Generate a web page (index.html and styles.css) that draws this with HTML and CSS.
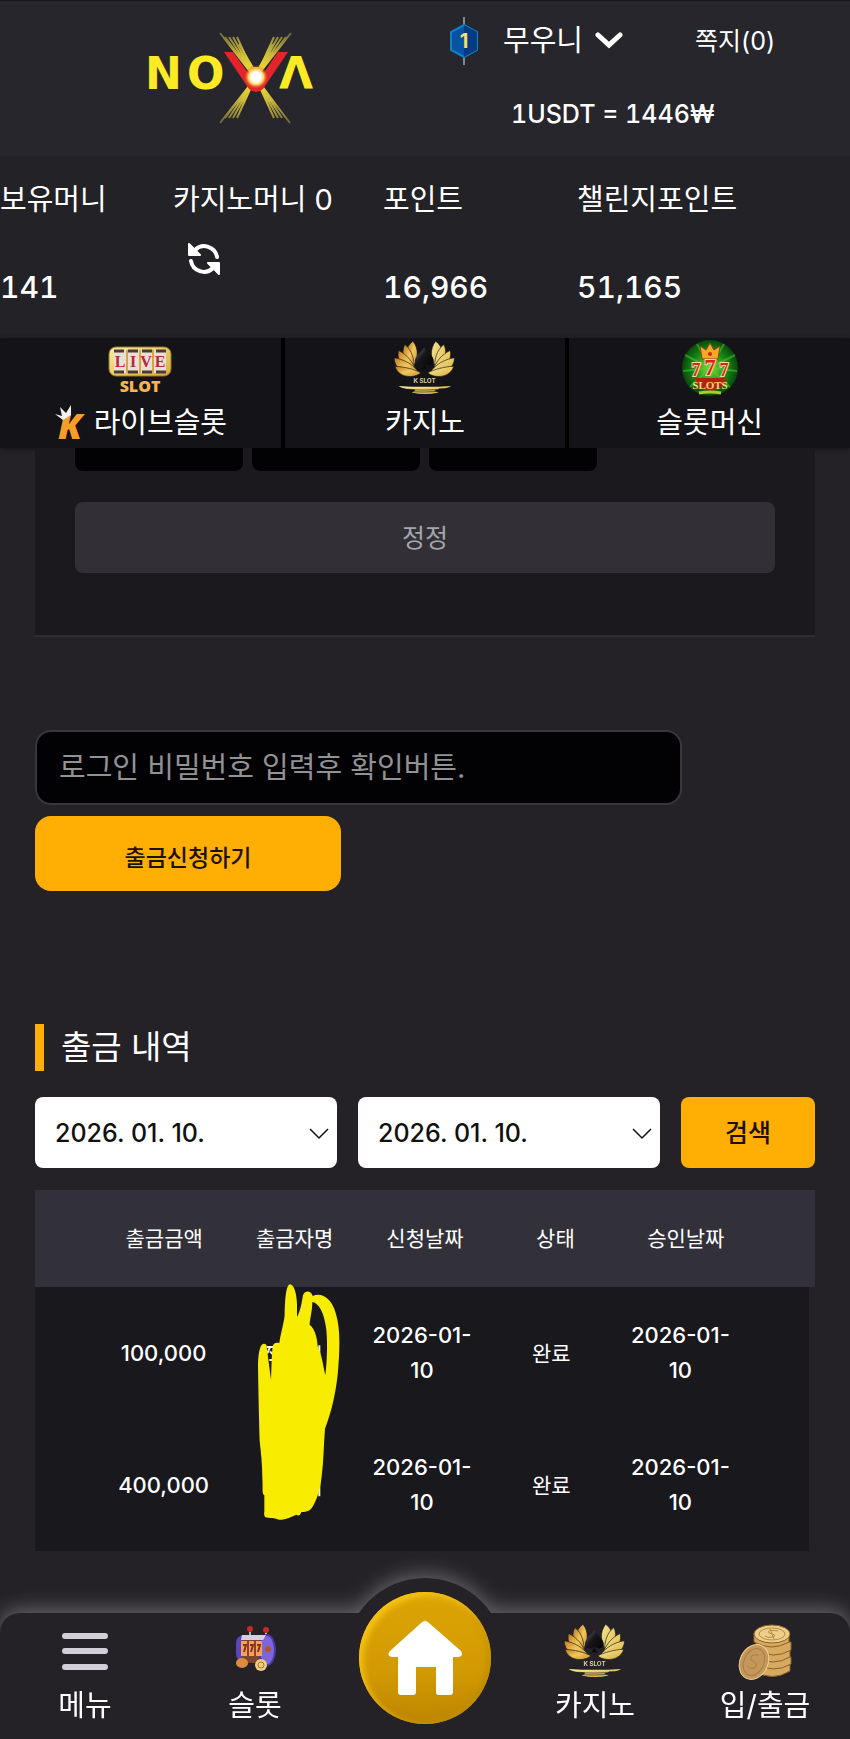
FILE: index.html
```html
<!DOCTYPE html>
<html lang="ko">
<head>
    <meta charset="UTF-8">
    <meta name="viewport" content="width=device-width, initial-scale=1.0">
    <title>NOVA</title>
    <link rel="stylesheet" href="styles.css">
</head>
<body>
    <!-- Shared gradients and icons -->
    <svg class="defs" width="0" height="0" aria-hidden="true">
        <defs>
            <linearGradient id="gold" x1="0" y1="0" x2="1" y2="1">
                <stop offset="0" stop-color="#b9781f"/>
                <stop offset="0.5" stop-color="#f2c75c"/>
                <stop offset="1" stop-color="#c98d2c"/>
            </linearGradient>
            <linearGradient id="gold-light" x1="0" y1="0" x2="1" y2="1">
                <stop offset="0" stop-color="#f7f0a0"/>
                <stop offset="1" stop-color="#dba936"/>
            </linearGradient>
            <linearGradient id="spade" x1="0" y1="0" x2="1" y2="1">
                <stop offset="0" stop-color="#77757e"/>
                <stop offset="0.4" stop-color="#17161a"/>
                <stop offset="1" stop-color="#000"/>
            </linearGradient>
            <symbol id="lotus" viewBox="25 10 195 175">
                <g fill="url(#gold)" stroke="#1c1a16" stroke-width="2">
                    <path d="M86 16C60 34 60 66 86 96C102 66 104 40 86 16Z"/>
                    <path d="M61 26C48 52 58 86 90 104C90 72 84 44 61 26Z"/>
                    <path d="M42 44C34 74 56 98 96 108C86 80 70 58 42 44Z"/>
                    <path d="M29 66C28 98 58 114 104 112C86 86 60 72 29 66Z"/>
                    <path d="M31 92C40 126 88 132 110 112C90 102 62 94 31 92Z"/>
                </g>
                <g fill="url(#gold-light)" stroke="#1c1a16" stroke-width="2">
                    <path d="M155 16C181 34 181 66 155 96C139 66 137 40 155 16Z"/>
                    <path d="M180 26C193 52 183 86 151 104C151 72 157 44 180 26Z"/>
                    <path d="M199 44C207 74 185 98 145 108C155 80 171 58 199 44Z"/>
                    <path d="M212 66C213 98 183 114 137 112C155 86 181 72 212 66Z"/>
                    <path d="M210 92C201 126 153 132 131 112C151 102 179 94 210 92Z"/>
                </g>
                <path d="M120 34C112 50 90 60 92 78C94 92 110 94 118 84C118 94 114 98 110 102H131C126 98 123 94 123 84C132 94 148 90 149 77C150 60 128 50 120 34Z" fill="url(#spade)"/>
                <text x="121" y="143" class="lotus-text">K SLOT</text>
                <path d="M42 152Q122 158 202 152Q190 160 166 160Q164 164 150 166Q158 170 164 172Q122 182 82 172Q96 168 90 163Q56 162 42 152Z" fill="url(#gold-light)"/>
                <path d="M70 162Q120 168 180 161M88 170Q120 172 158 169" stroke="#1c1a16" stroke-width="2" fill="none"/>
            </symbol>
        </defs>
    </svg>

    <header>
        <div class="header-content">
            <a href="#" class="logo" aria-label="NOVA">
                <svg width="172" height="94" viewBox="0 0 172 94">
                    <defs>
                        <radialGradient id="rays" gradientUnits="userSpaceOnUse" cx="107" cy="45" r="56">
                            <stop offset="0" stop-color="#ffe92e"/>
                            <stop offset="0.5" stop-color="#c9b83c"/>
                            <stop offset="1" stop-color="#6f6a38"/>
                        </radialGradient>
                        <radialGradient id="glow">
                            <stop offset="0" stop-color="#fff"/>
                            <stop offset="0.4" stop-color="#fff"/>
                            <stop offset="0.65" stop-color="#fbd35a"/>
                            <stop offset="1" stop-color="#f03a1c" stop-opacity="0"/>
                        </radialGradient>
                    </defs>
                    <text x="-4" y="57" class="logo-text">N</text>
                    <text x="38" y="57" class="logo-text">O</text>
                    <text x="130" y="57" class="logo-text">Λ</text>
                    <g stroke="url(#rays)" stroke-width="2">
                        <path d="M71 1L141 91M76 5L137 86M80 5L133 86M84 5L129 86M88 5L125 86"/>
                        <path d="M142 1L71 91M137 5L76 86M133 5L80 86M129 5L84 86M125 5L88 86"/>
                    </g>
                    <path d="M75 20H84L102 45Q107 51 112 45L129 20H139L114 57Q107 63 100 57Z" fill="#e3242b"/>
                    <path d="M90 12L104 36H110L124 12" fill="none" stroke="url(#rays)" stroke-width="2"/>
                    <circle cx="107" cy="45" r="12" fill="url(#glow)"/>
                </svg>
            </a>
            <div class="user-info">
                <div class="user-row">
                    <svg class="level" width="30" height="50" viewBox="0 0 30 50" aria-label="1">
                        <path d="M15 1V9M15 41V49" stroke="#87878c" stroke-width="2"/>
                        <path d="M15 9L28 16V34L15 41L2 34V16Z" fill="#0653a4" stroke="#0c83c4" stroke-width="2"/>
                        <path d="M15 9L28 16V34L15 41Z" fill="#063a83"/>
                        <text x="15" y="32" class="level-text">1</text>
                    </svg>
                    <button type="button" class="user-name">무우니
                        <svg width="28" height="18" viewBox="0 0 28 18"><path d="M3 3L14 13L25 3" fill="none" stroke="#fff" stroke-width="5" stroke-linecap="round"/></svg>
                    </button>
                    <a href="#" class="message">쪽지(0)</a>
                </div>
                <p class="rate">1USDT = 1446₩</p>
            </div>
        </div>

        <div class="money-bar">
            <div class="money">
                <span>보유머니</span>
                <strong>141</strong>
            </div>
            <div class="money">
                <span>카지노머니 0</span>
                <button type="button" class="refresh" aria-label="새로고침">
                    <svg width="32" height="32" viewBox="0 0 32 32">
                        <path d="M29 14A13 13 0 0 0 7 7M3 18A13 13 0 0 0 25 25" fill="none" stroke="#fff" stroke-width="4" stroke-linecap="round"/>
                        <path d="M1 1L12 12H1ZM31 31L20 20H31Z" fill="#fff" stroke="#fff" stroke-width="2" stroke-linejoin="round"/>
                    </svg>
                </button>
            </div>
            <div class="money">
                <span>포인트</span>
                <strong>16,966</strong>
            </div>
            <div class="money">
                <span>챌린지포인트</span>
                <strong>51,165</strong>
            </div>
        </div>

        <nav class="game-tabs">
            <a href="#">
                <svg width="64" height="58" viewBox="0 0 64 58">
                    <rect x="1" y="8" width="62" height="29" rx="7" fill="url(#gold-light)" stroke="#9c742a"/>
                    <rect x="6" y="11" width="52" height="23" fill="#e9dfd4"/>
                    <path d="M6 12H58M6 33H58" stroke="#4b3b36" stroke-width="3" stroke-dasharray="10 4"/>
                    <path d="M19 11V34M32 11V34M45 11V34" stroke="#d5a545" stroke-width="2"/>
                    <text x="12" y="28" class="live-text">L</text>
                    <text x="25" y="28" class="live-text">I</text>
                    <text x="38" y="28" class="live-text">V</text>
                    <text x="52" y="28" class="live-text">E</text>
                    <text x="32" y="53" class="slot-text">SLOT</text>
                </svg>
                <span>
                    <svg class="k-logo" width="36" height="38" viewBox="0 0 36 38">
                        <text x="4" y="35" class="k-text">K</text>
                        <path d="M1 10L8 12L6 3L12 9L17 1L17 11L9 16Z" fill="#f2f2f4"/>
                    </svg>라이브슬롯
                </span>
            </a>
            <a href="#">
                <svg width="64" height="58"><use href="#lotus"/></svg>
                <span>카지노</span>
            </a>
            <a href="#">
                <svg width="58" height="58" viewBox="0 0 58 58">
                    <defs>
                        <radialGradient id="green">
                            <stop offset="0" stop-color="#83e03a"/>
                            <stop offset="0.6" stop-color="#188a17"/>
                            <stop offset="1" stop-color="#064909"/>
                        </radialGradient>
                    </defs>
                    <circle cx="29" cy="29" r="28" fill="url(#green)"/>
                    <path d="M29 29L4 16M29 29L2 32M29 29L9 48M29 29L54 16M29 29L56 32M29 29L49 48M29 29L16 5M29 29L43 5" stroke="#5ec932" stroke-opacity="0.5" stroke-width="2"/>
                    <path d="M21 20L19 7L25 11L29 4L33 11L39 7L37 20Z" fill="#f3a828" stroke="#8b4510"/>
                    <circle cx="29" cy="15" r="2" fill="#ca281b"/>
                    <path d="M14 39H45Q42 52 29 52Q17 52 14 39Z" fill="#b3210f"/>
                    <text x="15" y="37" class="seven-text seven-side">7</text>
                    <text x="43" y="37" class="seven-text seven-side">7</text>
                    <text x="29" y="36" class="seven-text">7</text>
                    <text x="29" y="50" class="slots-text">SLOTS</text>
                    <path d="M18 54Q29 52 40 54" stroke="#9fd22a" stroke-width="3" fill="none"/>
                </svg>
                <span>슬롯머신</span>
            </a>
        </nav>
    </header>

    <main>
        <section class="amount-panel">
            <div class="amounts">
                <div></div>
                <div></div>
                <div></div>
            </div>
            <button type="button" class="btn-reset">정정</button>
        </section>

        <form class="withdraw-form">
            <input type="password" aria-label="비밀번호" placeholder="로그인 비밀번호 입력후 확인버튼.">
            <button type="button">출금신청하기</button>
        </form>

        <section class="history">
            <h2>출금 내역</h2>
            <form class="filters">
                <div class="date">
                    <select aria-label="시작 날짜"><option>2026. 01. 10.</option></select>
                    <svg width="20" height="12" viewBox="0 0 20 12"><path d="M1 1L10 10L19 1" fill="none" stroke="#111" stroke-width="1.5"/></svg>
                </div>
                <div class="date">
                    <select aria-label="종료 날짜"><option>2026. 01. 10.</option></select>
                    <svg width="20" height="12" viewBox="0 0 20 12"><path d="M1 1L10 10L19 1" fill="none" stroke="#111" stroke-width="1.5"/></svg>
                </div>
                <button type="button">검색</button>
            </form>

            <div class="table-wrap">
                <table>
                    <thead>
                        <tr>
                            <th>출금금액</th>
                            <th>출금자명</th>
                            <th>신청날짜</th>
                            <th>상태</th>
                            <th>승인날짜</th>
                        </tr>
                    </thead>
                    <tbody>
                        <tr>
                            <td>100,000</td>
                            <td></td>
                            <td>2026-01-<br>10</td>
                            <td class="status">완료</td>
                            <td>2026-01-<br>10</td>
                        </tr>
                        <tr>
                            <td>400,000</td>
                            <td></td>
                            <td>2026-01-<br>10</td>
                            <td class="status">완료</td>
                            <td>2026-01-<br>10</td>
                        </tr>
                    </tbody>
                </table>
                <!-- Marker over the account holder names -->
                <svg class="marker" width="84" height="239" viewBox="470 35 252 717" aria-hidden="true">
                    <path d="M500 227H520M509 227L501 246M509 240L518 250M507 266H518V276M657 222V262M657 625V675" fill="none" stroke="#eee" stroke-width="6"/>
                    <path d="M569 39C580 40 589 62 590 100V137C600 120 604 95 608 72C612 56 633 56 637 74C665 62 694 82 706 125C722 175 718 245 712 310C706 365 694 420 674 472C670 520 670 570 664 615C660 650 652 680 640 700C632 718 620 722 603 722C600 734 592 734 588 730C570 738 560 742 545 745C530 746 528 740 510 740C492 740 490 735 492 720V672C484 668 488 650 486 620C486 580 482 545 478 510C476 440 474 350 473 280C474 240 480 218 490 217C498 217 500 222 500 232C503 260 508 290 512 326C514 280 514 240 518 222C522 214 530 214 537 215C541 185 552 150 553 130C554 90 556 41 569 39ZM636 92C636 120 628 145 628 160C646 175 651 205 652 225C664 250 668 280 675 312C680 270 682 220 678 175C672 125 656 95 636 92Z" fill="#f8ed00"/>
                </svg>
            </div>
        </section>
    </main>

    <nav class="bottom-nav">
        <div class="nav-bg"></div>
        <a href="#">
            <svg width="48" height="58" viewBox="0 0 48 58"><path d="M4 14H44M4 29H44M4 45H44" stroke="#d3cfd8" stroke-width="6" stroke-linecap="round"/></svg>
            <span>메뉴</span>
        </a>
        <a href="#">
            <svg width="44" height="58" viewBox="0 0 44 58">
                <path d="M17 14V8M33 15V9" stroke="#c9a49d" stroke-width="2"/>
                <circle cx="17" cy="7" r="3" fill="#c22a2b"/>
                <circle cx="33" cy="8" r="3" fill="#c22a2b"/>
                <rect x="3" y="13" width="22" height="27" rx="8" fill="#5a45bb"/>
                <path d="M9 13H35V41H9Z" fill="#7d4430"/>
                <ellipse cx="34" cy="28" rx="8" ry="15" fill="#7c66d8" stroke="#4a37a8" stroke-width="2"/>
                <path d="M9 13H33L30 18H8Z" fill="#d8cfe0"/>
                <path d="M8 19H29V34H8Z" fill="#f1a35c"/>
                <path d="M15 18V35M22 18V35" stroke="#8a4326" stroke-width="2"/>
                <path d="M10 23H13L11 30M17 23H20L18 30M24 23H27L25 30" stroke="#8e2d20" stroke-width="2" fill="none"/>
                <circle cx="35" cy="27" r="3" fill="#b3522c"/>
                <ellipse cx="9" cy="41" rx="6" ry="5" fill="#dd8a44"/>
                <circle cx="28" cy="43" r="6" fill="#f1cd83"/>
                <circle cx="28" cy="43" r="3" fill="none" stroke="#a9752f"/>
            </svg>
            <span>슬롯</span>
        </a>
        <a href="#" class="home" aria-label="홈">
            <svg width="76" height="78" viewBox="0 0 76 78"><path d="M38 2Q40 2 42 4L74 32Q77 37 71 38H66V73Q66 76 63 76H52Q49 76 49 73V48H29V73Q29 76 26 76H14Q11 76 11 73V38H5Q-1 37 3 32L34 4Q36 2 38 2Z" fill="#fff"/></svg>
        </a>
        <a href="#">
            <svg width="64" height="58"><use href="#lotus"/></svg>
            <span>카지노</span>
        </a>
        <a href="#">
            <svg width="54" height="58" viewBox="0 0 54 58">
                <g fill="#d6aa60" stroke="#8c6128">
                    <path d="M17 42V49Q34 60 52 49V42Z"/>
                    <path d="M18 35V42Q36 52 53 42V35Z"/>
                    <path d="M17 28V35Q35 45 52 35V28Z"/>
                    <path d="M18 20V28Q36 38 53 28V20Z"/>
                    <path d="M16 11V20Q34 30 51 20V11Z"/>
                    <ellipse cx="34" cy="12" rx="18" ry="9" fill="#edcf8a"/>
                </g>
                <ellipse cx="34" cy="12" rx="13" ry="6" fill="none" stroke="#b78b42"/>
                <path d="M40 9Q28 7 31 11Q40 13 35 15Q29 16 27 14M32 7L36 17" fill="none" stroke="#b78b42" stroke-width="1"/>
                <ellipse cx="16" cy="40" rx="14" ry="18" transform="rotate(25 16 40)" fill="#c4975a" stroke="#ecd092" stroke-width="1"/>
                <ellipse cx="16" cy="40" rx="10" ry="14" transform="rotate(25 16 40)" fill="none" stroke="#a97e45"/>
                <path d="M21 33Q11 32 13 38Q21 41 17 46Q12 48 9 44" fill="none" stroke="#a97e45" stroke-width="1"/>
            </svg>
            <span>입/출금</span>
        </a>
    </nav>
</body>
</html>
```

FILE: styles.css
```css
/* General Styles */
* {
    box-sizing: border-box;
}

body {
    margin: 0;
    background-color: #242227;
    color: #fff;
    font-family: Inter, "Noto Sans CJK KR", sans-serif;
    font-size: 29px;
    line-height: 40px;
}

a {
    color: inherit;
    text-decoration: none;
}

button {
    border: none;
    background: none;
    padding: 0;
    color: inherit;
    font: inherit;
    cursor: pointer;
}

svg {
    display: block;
    flex-shrink: 0;
}

.defs {
    position: absolute;
}

/* Header Styles */
.header-content {
    display: grid;
    grid-template-columns: 449fr 401fr;
    min-height: 156px;
    background-color: #27262c;
    border-top: 1px solid #17161b;
}

.logo {
    display: flex;
    align-items: center;
    justify-content: center;
    padding-left: 20px;
}

.logo svg,
.k-logo {
    overflow: visible;
}

.logo-text {
    fill: #fbea24;
    font-family: "DejaVu Sans", sans-serif;
    font-size: 44px;
    font-weight: bold;
}

.user-info {
    padding-top: 20px;
}

.user-row {
    display: flex;
    align-items: center;
    height: 40px;
    margin-bottom: 33px;
}

.level-text {
    fill: #f6df6a;
    font-size: 20px;
    font-weight: bold;
    text-anchor: middle;
}

.user-name {
    display: flex;
    align-items: center;
    gap: 12px;
    margin-left: 24px;
}

.message {
    margin-left: 72px;
    font-size: 25px;
}

.rate {
    margin: 0;
    padding-left: 62px;
    font-size: 25px;
    font-weight: 500;
    font-variant-numeric: tabular-nums;
}

/* Money */
.money-bar {
    display: grid;
    grid-template-columns: 173fr 210fr 194fr 273fr;
    padding: 24px 0 31px;
    background-color: #232227;
}

.money span,
.money strong {
    display: block;
    white-space: nowrap;
}

.money strong {
    margin-top: 47px;
    font-size: 30px;
    font-weight: 500;
    font-variant-numeric: tabular-nums;
}

.refresh {
    margin: 23px 0 0 15px;
}

/* Game tabs */
.game-tabs {
    display: grid;
    grid-template-columns: repeat(3, 1fr);
    gap: 4px;
    background-color: #000;
    box-shadow: 0 1px 4px #141317;
}

.game-tabs a {
    display: flex;
    flex-direction: column;
    align-items: center;
    gap: 6px;
    padding: 1px 0 5px;
    background-color: #141317;
}

.game-tabs span {
    display: flex;
    align-items: center;
    gap: 4px;
}

.lotus-text {
    fill: #d9cf9c;
    font-size: 19px;
    font-weight: bold;
    text-anchor: middle;
}

.live-text {
    fill: #b3293a;
    font-family: "Liberation Serif", serif;
    font-size: 16px;
    font-weight: bold;
    text-anchor: middle;
}

.slot-text {
    fill: #f6b54e;
    font-family: "Open Sans", sans-serif;
    font-size: 16px;
    font-weight: 800;
    text-anchor: middle;
}

.k-text {
    fill: #f99d28;
    font-family: "Open Sans", sans-serif;
    font-size: 36px;
    font-style: italic;
    font-weight: 800;
}

.seven-text {
    fill: #dc2117;
    stroke: #f5d9a0;
    stroke-width: 2px;
    paint-order: stroke;
    font-family: "Liberation Serif", serif;
    font-size: 23px;
    font-weight: bold;
    text-anchor: middle;
}

.seven-side {
    font-size: 18px;
}

.slots-text {
    fill: #ffd979;
    font-family: "Liberation Serif", serif;
    font-size: 11px;
    font-weight: bold;
    text-anchor: middle;
}

/* Main Content */
main {
    padding: 0 35px 188px;
}

.amount-panel {
    padding: 0 40px 62px;
    background-color: #1b191e;
    border-bottom: 2px solid #2e2c31;
}

.amounts {
    display: flex;
    gap: 9px;
    margin-bottom: 31px;
}

.amounts div {
    width: 24%;
    height: 23px;
    background-color: #020104;
    border-radius: 0 0 8px 8px;
}

.btn-reset {
    display: block;
    width: 100%;
    height: 71px;
    background-color: #323036;
    border-radius: 8px;
    color: #a3a6aa;
    font-size: 25px;
}

/* Withdraw form */
.withdraw-form {
    display: flex;
    flex-direction: column;
    align-items: flex-start;
    gap: 11px;
    margin-top: 93px;
}

.withdraw-form input {
    width: 83%;
    height: 75px;
    padding: 0 22px;
    background-color: #020104;
    border: 2px solid #39373c;
    border-radius: 16px;
    color: #fff;
    font: inherit;
}

.withdraw-form input::placeholder {
    color: #929194;
    opacity: 1;
}

.withdraw-form button {
    width: 306px;
    height: 75px;
    padding-top: 8px;
    background-color: #ffae03;
    border-radius: 16px;
    color: #1d1009;
    font-size: 23px;
    font-weight: 500;
}

/* Withdraw history */
.history h2 {
    margin: 133px 0 26px;
    padding-left: 17px;
    border-left: 9px solid #ffae0b;
    font-size: 33px;
    font-weight: 400;
    line-height: 47px;
}

.filters {
    display: grid;
    grid-template-columns: 302fr 302fr 134fr;
    gap: 21px;
    margin-bottom: 22px;
}

.date {
    position: relative;
}

.date select {
    width: 100%;
    height: 71px;
    padding: 0 20px;
    appearance: none;
    background-color: #fff;
    border: none;
    border-radius: 8px;
    color: #111;
    font: inherit;
    font-size: 25px;
    font-weight: 500;
}

.date svg {
    position: absolute;
    top: 31px;
    right: 8px;
    pointer-events: none;
}

.filters button {
    background-color: #ffae03;
    border-radius: 8px;
    color: #1d1009;
    font-size: 25px;
    font-weight: 500;
}

.table-wrap {
    position: relative;
}

table,
thead,
tbody {
    display: block;
}

tr {
    display: grid;
    grid-template-columns: repeat(5, 1fr);
    align-items: center;
    padding: 0 64px;
}

thead tr {
    height: 97px;
    background-color: #32313a;
}

tbody tr {
    height: 132px;
    margin-right: 6px;
    background-color: #19181d;
}

th,
td {
    padding: 0;
    text-align: center;
    font-size: 22px;
    font-weight: 500;
    line-height: 35px;
}

th,
td.status {
    font-size: 21px;
    font-weight: 400;
}

.marker {
    position: absolute;
    top: 93px;
    left: 222px;
}

/* Bottom navigation */
.bottom-nav {
    position: fixed;
    right: 0;
    bottom: 0;
    left: 0;
    display: grid;
    grid-template-columns: repeat(5, 1fr);
    padding: 9px 0 13px;
}

.bottom-nav a {
    position: relative;
    display: flex;
    flex-direction: column;
    align-items: center;
    gap: 6px;
}

.nav-bg {
    position: absolute;
    inset: 0;
    filter: drop-shadow(0 -4px 10px rgba(255, 255, 255, 0.3));
}

.nav-bg::before,
.nav-bg::after {
    content: "";
    position: absolute;
    background-color: #242227;
}

.nav-bg::before {
    inset: 0;
    border-radius: 20px 20px 0 0;
}

/* Raised ring behind the home button */
.nav-bg::after {
    top: -35px;
    left: calc(50% - 80px);
    width: 160px;
    height: 160px;
    border-radius: 50%;
}

.bottom-nav .home {
    justify-content: center;
    justify-self: center;
    width: 132px;
    height: 132px;
    margin: -30px 0 -13px;
    background: linear-gradient(#dba504, #d29a02 60%, #bd8500);
    border-radius: 50%;
    box-shadow: inset 4px 4px 6px #f6c414, inset -3px -3px 6px #c18b02;
}
```
